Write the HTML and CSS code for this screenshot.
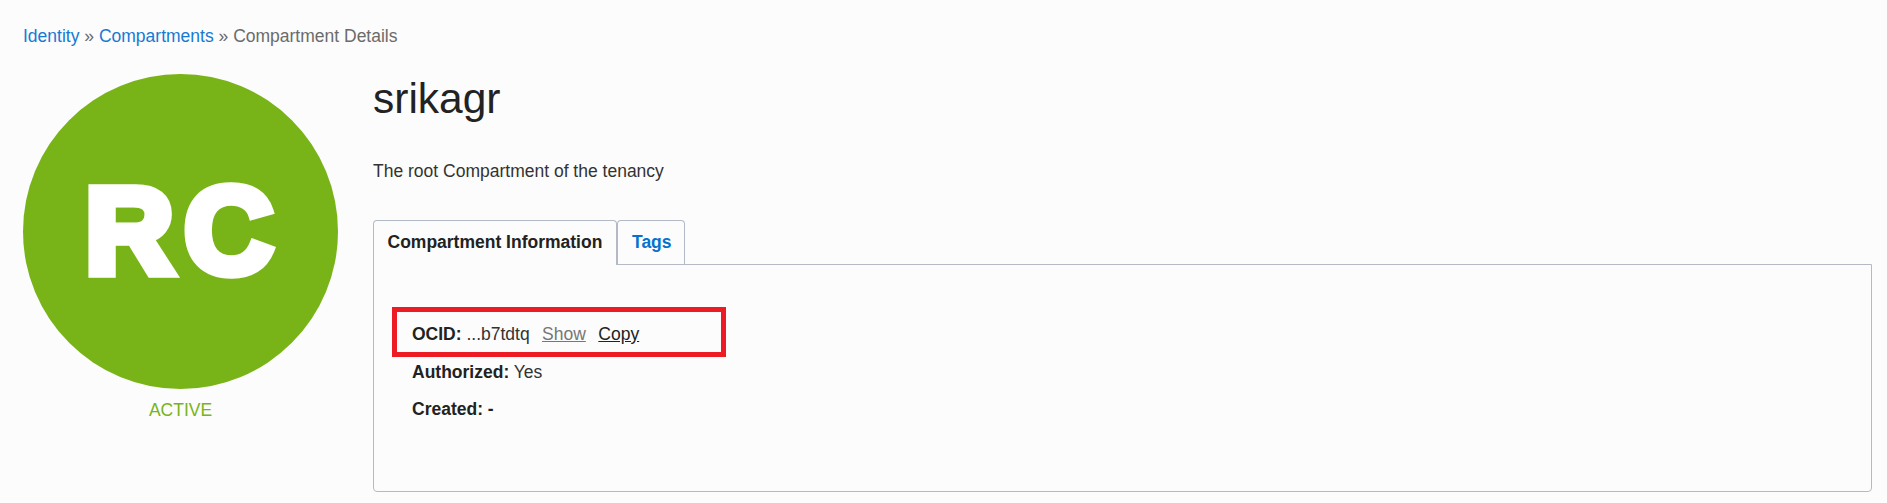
FILE: index.html
```html
<!DOCTYPE html>
<html lang="en">
<head>
<meta charset="utf-8">
<title>Compartment Details</title>
<link rel="stylesheet" href="styles.css">
</head>
<body>
<nav class="breadcrumb"><a href="#">Identity</a> » <a href="#">Compartments</a> » Compartment Details</nav>
<main class="layout">
  <aside class="status">
    <div class="badge">RC</div>
    <span class="state">ACTIVE</span>
  </aside>
  <section class="details">
    <h1 class="title">srikagr</h1>
    <p class="description">The root Compartment of the tenancy</p>
    <div class="tabs">
      <a class="tab tab-active">Compartment Information</a>
      <a class="tab">Tags</a>
    </div>
    <div class="panel">
      <div class="row highlighted"><b>OCID:</b> ...b7tdtq <a class="show">Show</a><a class="copy">Copy</a></div>
      <div class="row"><b>Authorized:</b> Yes</div>
      <div class="row"><b>Created: -</b></div>
    </div>
  </section>
</main>
</body>
</html>
```
FILE: styles.css
```css
* { box-sizing: border-box; }
body {
  margin: 0;
  padding: 25px 15px 0 23px;
  height: 503px;
  overflow: hidden;
  background: #fcfcfc;
  color: #333;
  font: 17.5px/22px "Liberation Sans", Arial, sans-serif;
}
a { color: #0572ce; text-decoration: none; }
.breadcrumb { height: 49px; color: #6b6b6b; }
.breadcrumb a { color: #1779d4; }
.layout { display: flex; gap: 35px; }
.status { width: 315px; display: flex; flex-direction: column; align-items: center; }
.badge {
  width: 315px;
  height: 315px;
  padding-left: 62px;
  border-radius: 50%;
  background: #78b418;
  color: #fff;
  font-size: 123px;
  font-weight: bold;
  line-height: 314px;
  letter-spacing: 10.5px;
  white-space: nowrap;
  /* Thickens the initials to a black weight. */
  -webkit-text-stroke: 9.5px #fff;
}
.state { margin-top: 10px; color: #78b418; }
.details { flex: 1; min-width: 0; }
.title { margin: 0; padding-top: 1px; font-size: 42.5px; line-height: 48px; font-weight: normal; color: #222; }
.description { margin: 37px 0 0; }
.tabs { display: flex; margin-top: 38px; height: 44px; }
.tab {
  height: 44px;
  padding: 10px 14px 0 14px;
  border: 1px solid #b4bac5;
  border-bottom: 0;
  border-radius: 4px 4px 0 0;
  font-weight: bold;
  white-space: nowrap;
}
.tab:last-child { width: 68px; }
.tab-active {
  position: relative;
  width: 244px;
  height: 45px;
  padding-left: 13.5px;
  background: #fcfcfc;
  color: #222;
}
.panel {
  height: 228px;
  padding: 50px 38px 0;
  border: 1px solid #b4bac5;
  border-radius: 0 0 4px 4px;
}
.row { height: 37.5px; padding-top: 8px; white-space: nowrap; }
.row b { color: #222; }
.highlighted { position: relative; }
.highlighted::after {
  content: "";
  position: absolute;
  box-sizing: border-box;
  left: -20px;
  top: -8px;
  width: 334px;
  height: 50px;
  border: 5px solid #ed1c24;
}
.show, .copy { text-decoration: underline; }
.show { margin: 0 12.5px 0 7.5px; color: #777; }
.copy { color: #222; }
```
